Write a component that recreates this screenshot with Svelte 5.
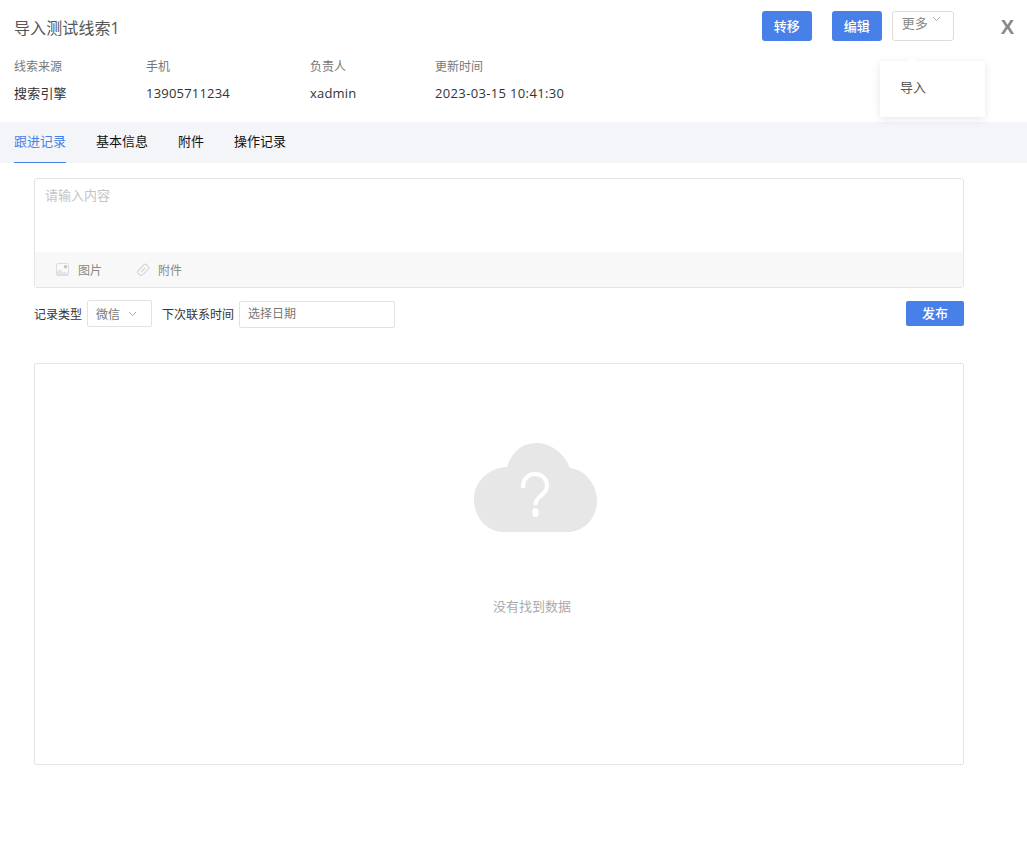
<script>
  const meta = [
    { label: '线索来源', value: '搜索引擎', w: 132 },
    { label: '手机', value: '13905711234', w: 164 },
    { label: '负责人', value: 'xadmin', w: 125 },
    { label: '更新时间', value: '2023-03-15 10:41:30', w: 200, wide: true }
  ];
  const tabs = ['跟进记录', '基本信息', '附件', '操作记录'];
</script>

<div class="page">
  <header class="head">
    <div class="top">
      <h1>导入测试线索1</h1>
      <div class="actions">
        <button class="primary">转移</button>
        <button class="primary second">编辑</button>
        <button class="more">更多<svg width="9" height="6" viewBox="0 0 9 6"><path d="M1 1l3.500 3.500L8 1" fill="none" stroke="#aaa" stroke-width="1"/></svg></button>
        <span class="close">X</span>
      </div>
    </div>
    <div class="meta">
      {#each meta as m}
        <div class="col" style="width:{m.w}px">
          <div class="label">{m.label}</div>
          <div class="value" class:wide={m.wide}>{m.value}</div>
        </div>
      {/each}
    </div>
  </header>

  <nav class="tabs">
    {#each tabs as t, i}
      <span class="tab" class:active={i === 0}>{t}</span>
    {/each}
  </nav>

  <main class="body">
    <section class="editor">
      <div class="placeholder">请输入内容</div>
      <div class="tools">
        <span class="tool">
          <svg width="14" height="14" viewBox="0 0 14 14"><rect x="0.500" y="0.500" width="12" height="12" rx="1.500" fill="#fafafa" stroke="#dcdcdc"/><path d="M1 12V8.500l3-2.500 3.500 3.500 1.500-1 3.500 2.500V12z" fill="#e4e4e4"/><circle cx="9.500" cy="3.800" r="1.800" fill="#c4c4c4"/></svg>
          图片
        </span>
        <span class="tool">
          <svg width="14" height="14" viewBox="0 0 14 14"><path d="M8.200 1.500a1.500 1.500 0 0 1 2 0l2.300 2.300a1.500 1.500 0 0 1 0 2L6.500 11.800a2 2 0 0 1-2.800 0L2.200 10.300a2 2 0 0 1 0-2.800zM5 9.200l4.200-4.200" fill="none" stroke="#d8d8d8" stroke-width="1.200"/></svg>
          附件
        </span>
      </div>
    </section>

    <div class="form">
      <span class="flabel">记录类型</span>
      <span class="select">微信<svg width="9" height="6" viewBox="0 0 9 6"><path d="M1 1l3.500 3.500L8 1" fill="none" stroke="#aaa" stroke-width="1"/></svg></span>
      <span class="flabel next">下次联系时间</span>
      <span class="date">选择日期</span>
      <button class="publish">发布</button>
    </div>

    <section class="empty">
      <svg class="cloud" width="123" height="89" viewBox="0 0 123 89">
        <path d="M30 89C13 89 0 75 0 56C0 39 14 25 33 24C37 10 48 0 62 0C77 0 90 10 96 25C111 27 123 41 123 58C123 75 110 89 93 89Z" fill="#e7e7e7"/>
        <path d="M49 45C49 36 54 31 61 31C68 31 73 36 73 43C73 48 69 51 66 53.500C63 56 61.500 58 61.500 62" fill="none" stroke="#fff" stroke-width="4.200"/>
        <rect x="58.500" y="65" width="6" height="9" rx="3" fill="#fff"/>
      </svg>
      <div class="none">没有找到数据</div>
    </section>
  </main>

  <div class="menu">
    <span class="caret"></span>
    <div class="item">导入</div>
  </div>
</div>

<style>
  :global(body) {
    margin: 0;
    background: #fff;
  }
  .page {
    position: relative;
    width: 1027px;
    height: 855px;
    overflow: hidden;
    font-family: "Open Sans", "Noto Sans CJK SC", sans-serif;
    font-size: 13px;
    color: #333;
  }
  .head {
    height: 122px;
    padding: 0 0 0 14px;
    box-sizing: border-box;
  }
  .top {
    display: flex;
    align-items: flex-start;
    justify-content: space-between;
    height: 45px;
    padding-top: 11px;
    box-sizing: border-box;
  }
  h1 {
    margin: 0;
    font-size: 16px;
    font-weight: 400;
    line-height: 34px;
    color: #555;
    letter-spacing: 0.1px;
  }
  .actions {
    display: flex;
    align-items: flex-start;
    padding-right: 13px;
  }
  button {
    font: inherit;
    box-sizing: border-box;
    cursor: pointer;
  }
  .primary {
    width: 50px;
    height: 30px;
    padding: 0 0 2px;
    border: 0;
    border-radius: 3px;
    background: #4680e8;
    color: #fff;
    font-weight: 500;
  }
  .second {
    margin-left: 20px;
  }
  .more {
    width: 62px;
    height: 30px;
    margin-left: 10px;
    padding: 0 0 8px 9px;
    border: 1px solid #ddd;
    border-radius: 3px;
    background: #fff;
    color: #888;
    display: flex;
    align-items: center;
    gap: 4px;
  }
  .more svg {
    margin-bottom: 6px;
  }
  .close {
    margin-left: 47px;
    font-family: "Liberation Sans", sans-serif;
    font-size: 20px;
    font-weight: 700;
    line-height: 32px;
    color: #888;
  }
  .meta {
    display: flex;
    padding-top: 13px;
  }
  .label {
    font-size: 12px;
    line-height: 18px;
    color: #777;
  }
  .value {
    margin-top: 8px;
    font-size: 13px;
    line-height: 18px;
    color: #333;
    letter-spacing: 0.2px;
  }
  .value.wide {
    letter-spacing: 0.35px;
  }
  .tabs {
    display: flex;
    gap: 30px;
    height: 41px;
    padding-left: 14px;
    background: #f4f5f9;
  }
  .tab {
    line-height: 39px;
    color: #111;
  }
  .tab.active {
    height: 40px;
    color: #4680e8;
    border-bottom: 1px solid #4680e8;
  }
  .body {
    padding: 15px 0 0 34px;
    width: 930px;
  }
  .editor {
    height: 110px;
    box-sizing: border-box;
    border: 1px solid #e4e4e4;
    border-radius: 3px;
    display: flex;
    flex-direction: column;
  }
  .placeholder {
    flex: 1;
    padding: 7px 10px;
    color: #c4c4c4;
    line-height: 18px;
  }
  .tools {
    height: 35px;
    display: flex;
    align-items: center;
    gap: 34px;
    padding-left: 21px;
    background: #f8f8f8;
    color: #888;
    font-size: 12px;
  }
  .tool {
    display: flex;
    align-items: center;
    gap: 8px;
  }
  .form {
    display: flex;
    align-items: center;
    height: 27px;
    margin-top: 12px;
    font-size: 12px;
  }
  .flabel {
    color: #333;
  }
  .next {
    margin-left: 10px;
  }
  .select {
    box-sizing: border-box;
    width: 65px;
    height: 27px;
    margin-left: 5px;
    padding: 0 14px 0 8px;
    border: 1px solid #e2e2e2;
    border-radius: 2px;
    display: flex;
    align-items: center;
    justify-content: space-between;
    color: #777;
  }
  .date {
    box-sizing: border-box;
    width: 156px;
    height: 27px;
    margin: 2px 0 0 5px;
    padding-left: 8px;
    border: 1px solid #e2e2e2;
    border-radius: 2px;
    line-height: 23px;
    color: #777;
  }
  .publish {
    width: 58px;
    height: 25px;
    margin-left: auto;
    padding: 0 0 2px;
    border: 0;
    border-radius: 2px;
    background: #4680e8;
    color: #fff;
    font-size: 13px;
    font-weight: 500;
  }
  .empty {
    box-sizing: border-box;
    height: 402px;
    margin-top: 36px;
    border: 1px solid #e4e4e4;
    border-radius: 2px;
    display: flex;
    flex-direction: column;
    align-items: center;
    padding: 79px 0 0 72px;
  }
  .cloud {
    display: block;
  }
  .none {
    margin: 65px 6px 0 0;
    color: #aaa;
    line-height: 18px;
  }
  .menu {
    position: absolute;
    left: 880px;
    top: 61px;
    width: 105px;
    height: 56px;
    box-sizing: border-box;
    padding: 17px 20px;
    background: #fff;
    box-shadow: 0 2px 10px rgba(0, 0, 0, 0.1);
    border-radius: 2px;
    color: #555;
    line-height: 18px;
  }
  .caret {
    position: absolute;
    left: 27px;
    top: -4px;
    width: 0;
    height: 0;
    border-left: 5px solid transparent;
    border-right: 5px solid transparent;
    border-bottom: 4px solid #fff;
  }
</style>
